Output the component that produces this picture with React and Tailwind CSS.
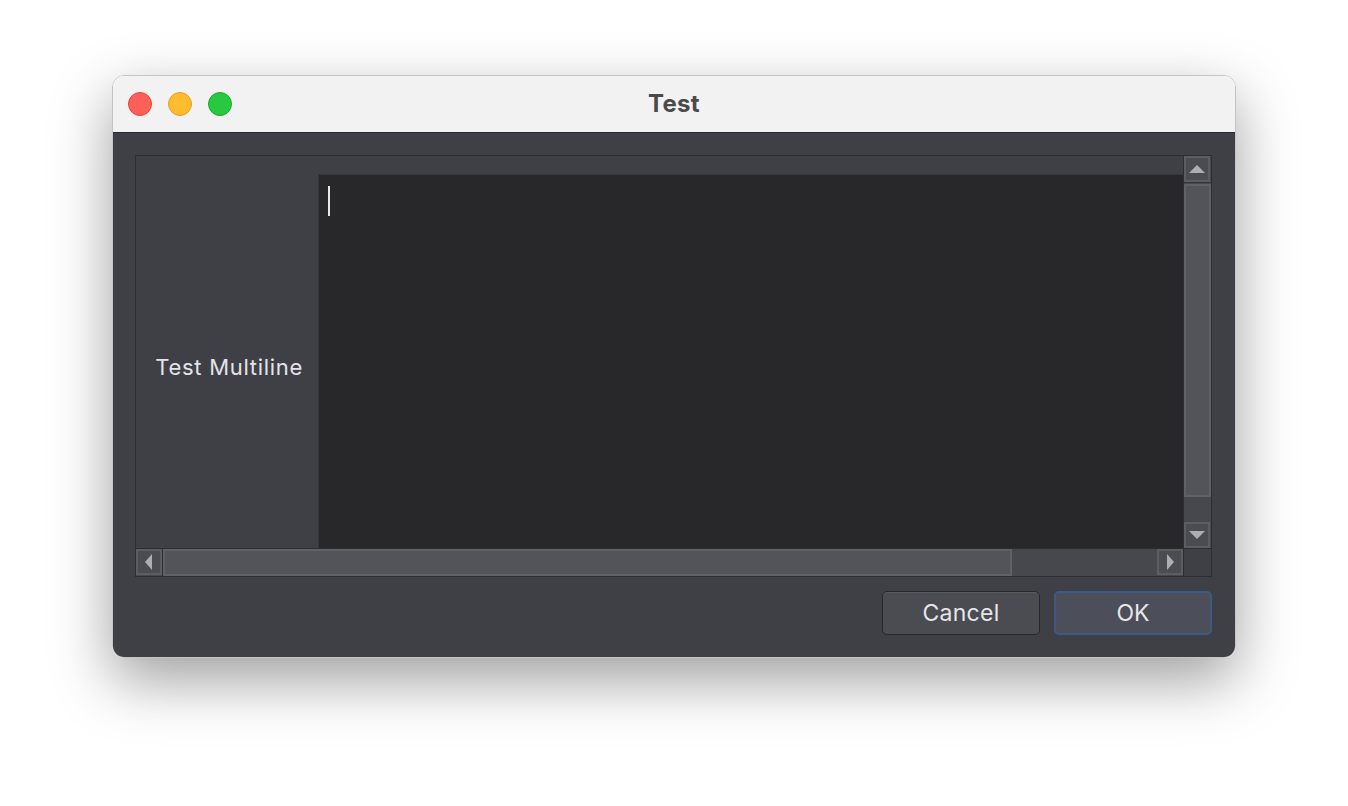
import React from "react";

function Arrow({ dir }) {
  const pts = {
    up: "0,12 8,4 16,12",
    down: "0,4 8,12 16,4",
    left: "11,0 4,8 11,16",
    right: "5,0 12,8 5,16",
  };
  return (
    <svg width="16" height="16" viewBox="0 0 16 16">
      <polygon points={pts[dir]} fill="#aeaeb2" />
    </svg>
  );
}

function ScrollButton({ dir }) {
  return (
    <div className="w-[26px] h-[26px] flex items-center justify-center bg-[#4b4c51] border-2 border-[#5c5d62]">
      <Arrow dir={dir} />
    </div>
  );
}

export default function App() {
  return (
    <div
      className="w-[1348px] h-[806px] bg-white flex justify-center pt-[75px]"
      style={{ fontFamily: "Inter, 'Noto Sans', sans-serif" }}
    >
      <div className="w-[1124px] h-[583px] rounded-[12px] overflow-hidden flex flex-col border border-[#c4c4c4] shadow-[0_22px_60px_rgba(0,0,0,0.38)]">
        {/* title bar */}
        <div className="h-[57px] bg-[#f2f2f2] border-b border-[#2a2a2c] relative flex items-center justify-center shrink-0">
          <div className="absolute left-[15px] top-[16px] flex gap-[16px]">
            <div className="w-[24px] h-[24px] rounded-full bg-[#fe5f57] border border-[#e2463f]" />
            <div className="w-[24px] h-[24px] rounded-full bg-[#febc2e] border border-[#e1a126]" />
            <div className="w-[24px] h-[24px] rounded-full bg-[#28c840] border border-[#1aab29]" />
          </div>
          <span className="text-[24px] font-bold text-[#4a4a4a] tracking-[0.3px]">Test</span>
        </div>

        {/* body */}
        <div className="flex-1 bg-[#3f4046] pl-[22px] pr-[23px] pt-[22px] flex flex-col">
          <div className="h-[422px] border border-[#2d2e32] grid grid-cols-[1fr_28px] grid-rows-[1fr_28px]">
            <div className="flex pt-[18px] overflow-hidden">
              <div className="w-[182px] shrink-0 flex items-center justify-end pr-[15px] pt-[12px]">
                <span className="text-[22px] text-[#e4e4e6] tracking-[0.7px]">Test Multiline</span>
              </div>
              <div className="flex-1 bg-[#28282b] border-l border-t border-[#36373b] pl-[9px] pt-[11px]">
                <div className="w-[2px] h-[30px] bg-[#e8e8e8]" />
              </div>
            </div>

            {/* vertical scrollbar */}
            <div className="bg-[#47484d] border-l border-[#2d2e32] flex flex-col">
              <ScrollButton dir="up" />
              <div className="h-[1px] bg-[#35363a]" />
              <div className="h-[313px] mt-[1px] bg-[#535459] border-2 border-[#606166]" />
              <div className="flex-1 bg-[#47484d]" />
              <ScrollButton dir="down" />
            </div>

            {/* horizontal scrollbar */}
            <div className="bg-[#47484d] border-t border-[#2d2e32] flex">
              <ScrollButton dir="left" />
              <div className="w-[1px] bg-[#2d2e32]" />
              <div className="w-[849px] bg-[#535459] border-2 border-[#606166]" />
              <div className="flex-1 bg-[#47484d]" />
              <ScrollButton dir="right" />
            </div>
            <div className="bg-[#3f4046] border-l border-t border-[#2d2e32]" />
          </div>

          <div className="flex justify-end gap-[14px] mt-[14px]">
            <button className="w-[158px] h-[44px] rounded-[5px] bg-[#4b4c51] border border-[#27282b] shadow-[inset_0_1px_0_#5a5b60] text-[23px] text-[#e6e6e8] tracking-[0.3px]">
              Cancel
            </button>
            <button className="w-[158px] h-[44px] rounded-[5px] bg-[#4c4e5a] border-2 border-[#3d5a86] text-[23px] text-[#e6e6e8]">
              OK
            </button>
          </div>
        </div>
      </div>
    </div>
  );
}
